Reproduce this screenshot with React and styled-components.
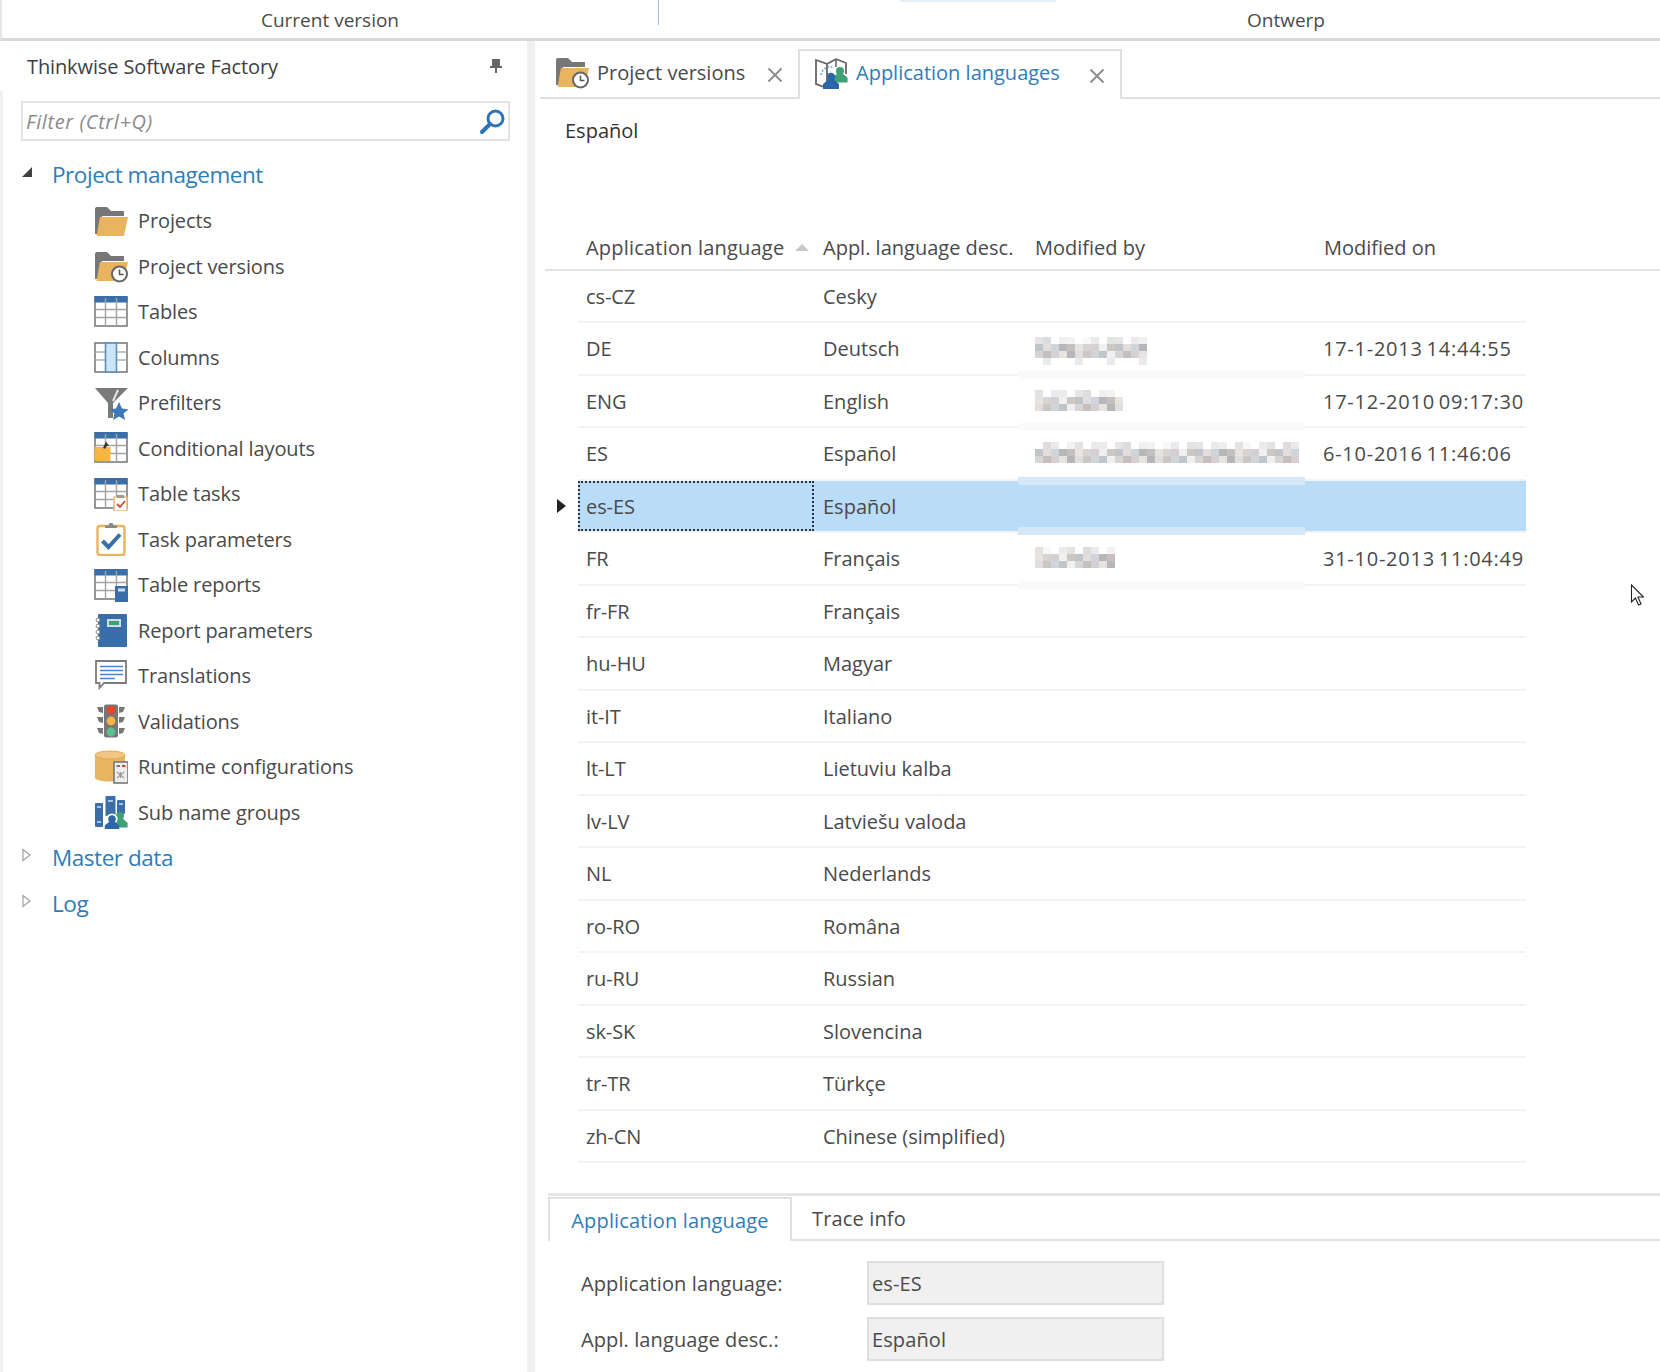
import React from "react";
import styled, { createGlobalStyle } from "styled-components";

const Global = createGlobalStyle`
  html, body { margin: 0; padding: 0; background: #fff; }
  body { font-family: "Open Sans", "Noto Sans", sans-serif; color: #444; width: 1660px; height: 1372px; overflow: hidden; }
  * { box-sizing: border-box; }
`;

const Page = styled.div`
  position: relative;
  width: 1660px;
  height: 1372px;
  display: flex;
  flex-direction: column;
  overflow: hidden;
  background: #fff;
`;

const TopBar = styled.header`
  position: relative;
  height: 41px;
  flex: none;
  display: flex;
  border-bottom: 3px solid #d9d9d9;
  border-left: 2px solid #e6e6e6;
`;
const TopCell = styled.div`
  width: ${p => p.$w}px;
  flex: none;
  height: 36px;
  display: flex;
  align-items: center;
  justify-content: center;
  padding-top: 3px;
  font-size: 19px;
  color: #4a4a4a;
`;
const TopDivider = styled.div`
  width: 1px;
  height: 25px;
  background: #a9bcd8;
  flex: none;
`;
const TopAccent = styled.div`
  position: absolute;
  left: 898px;
  top: 0;
  width: 156px;
  height: 2px;
  background: #e3effb;
`;

const Body = styled.div`
  flex: 1;
  display: flex;
  min-height: 0;
`;

const Side = styled.aside`
  width: 535px;
  flex: none;
  display: flex;
  flex-direction: column;
  border-right: 8px solid #f0f0f0;
`;
const SideHead = styled.div`
  height: 50px;
  flex: none;
  display: flex;
  align-items: center;
  justify-content: space-between;
  padding: 0 24px 0 27px;
  font-size: 20px;
  letter-spacing: -0.12px;
  color: #3f3f3f;
`;
const SideBody = styled.div`
  flex: 1;
  border-left: 3px solid #f0f0f0;
  padding: 10px 17px 0 18px;
`;
const Filter = styled.div`
  height: 40px;
  display: flex;
  align-items: center;
  justify-content: space-between;
  padding: 0 2px 0 3px;
  border: 2px solid #e3e3e3;
  font-size: 20px;
  font-style: italic;
  letter-spacing: 0.6px;
  color: #8a8a8a;
`;
const TreeHead = styled.div`
  height: ${p => p.$h || 45.5}px;
  margin-top: ${p => p.$top || 0}px;
  display: flex;
  align-items: center;
  font-size: 22.5px;
  letter-spacing: -0.45px;
  color: #2f7db8;
`;
const Arrow = styled.span`
  width: 31px;
  flex: none;
  display: flex;
  align-items: center;
  padding-bottom: 5px;
`;
const TreeGroup = styled.div`
  display: flex;
  flex-direction: column;
  padding-left: 73px;
  margin-top: -3px;
`;
const TreeItem = styled.div`
  height: 45.5px;
  display: flex;
  align-items: center;
  gap: 10px;
  font-size: 20px;
  letter-spacing: -0.12px;
  color: #4a4a4a;
`;

const Main = styled.main`
  flex: 1;
  min-width: 0;
  display: flex;
  flex-direction: column;
`;
const TabStrip = styled.div`
  height: 58px;
  flex: none;
  display: flex;
  align-items: flex-end;
  margin-left: 5px;
  border-bottom: 2px solid #e0e0e0;
`;
const DocTab = styled.div`
  width: ${p => p.$w}px;
  flex: none;
  display: flex;
  align-items: center;
  gap: 8px;
  padding-left: ${p => p.$pad}px;
  font-size: 20px;
  color: ${p => (p.$active ? "#2f7db8" : "#4a4a4a")};
  background: #fff;
  position: relative;
  ${p => (p.$active
    ? "border: 2px solid #e0e0e0; border-bottom: none; margin-bottom: -2px; height: 50px; padding-bottom: 5px;"
    : "height: 46px; margin-bottom: 2px;")}
`;
const CloseSlot = styled.span`
  position: absolute;
  right: ${p => p.$r}px;
  top: 50%;
  margin-top: ${p => p.$m}px;
  width: 16px;
  height: 16px;
`;
const RecordTitle = styled.div`
  height: 150px;
  flex: none;
  padding: 18px 0 0 30px;
  font-size: 20px;
  font-weight: 500;
  color: #333;
`;
const GridHead = styled.div`
  height: 37px;
  flex: none;
  margin-left: 10px;
  padding-left: 33px;
  display: flex;
  align-items: flex-start;
  border-bottom: 2px solid #e3e3e3;
  margin-top: -15px;
  font-size: 20px;
  color: #4a4a4a;
`;
const Col = styled.div`
  flex: none;
  width: ${p => p.$w}px;
  padding-left: ${p => p.$pad ?? 8}px;
  position: relative;
  white-space: nowrap;
  letter-spacing: ${p => p.$track || 0}px;
`;
const DateCol = styled(Col)`
  letter-spacing: 0.75px;
  word-spacing: -2px;
`;
const SortMark = styled.span`
  position: absolute;
  left: 217px;
  top: 10px;
  width: 0;
  height: 0;
  border-left: 7px solid transparent;
  border-right: 7px solid transparent;
  border-bottom: 7px solid #c8c8c8;
`;
const Rows = styled.div`
  flex: none;
  margin-top: -0.2px;
  padding-left: 43px;
  position: relative;
`;
const Row = styled.div`
  position: relative;
  width: 948px;
  height: 52.5px;
  display: flex;
  align-items: center;
  border-bottom: 2px solid #f3f3f3;
  font-size: 20px;
  letter-spacing: -0.1px;
  color: #4a4a4a;
  background: ${p => (p.$selected ? "#b9dcf9" : "transparent")};
`;
const RowPointer = styled.span`
  position: absolute;
  left: -21px;
  top: 18px;
  width: 0;
  height: 0;
  border-top: 7px solid transparent;
  border-bottom: 7px solid transparent;
  border-left: 9px solid #222;
`;
const FocusCell = styled.div`
  flex: none;
  width: ${p => p.$w}px;
  height: 50px;
  padding-left: 8px;
  display: flex;
  align-items: center;
  ${p => (p.$focus ? "outline: 2px dotted #2b3540; outline-offset: -2px;" : "")}
`;
const MaskCell = styled.div`
  position: relative;
  flex: none;
  width: 287px;
  height: 100%;
  padding: 5px 0 0 17px;
  display: flex;
  align-items: center;
  ${p => (p.$selected
    ? "background: linear-gradient(#d5e8f8 0 4px, #b9dcf9 4px calc(100% - 4px), #d5e8f8 calc(100% - 4px)); box-shadow: 0 -4px 0 #d5e8f8, 0 4px 0 #d5e8f8;"
    : "")}
  ${p => (p.$band
    ? "&::after { content: ''; position: absolute; left: 0; right: 0; bottom: -5px; height: 8px; background: #fafafa; }"
    : "")}
`;
const Details = styled.section`
  flex: 1;
  margin-top: 30px;
  margin-left: 13px;
  border-top: 3px solid #e6e6e6;
`;
const DetailTabs = styled.div`
  height: 43px;
  margin-top: 2px;
  display: flex;
  align-items: flex-end;
  border-bottom: 2px solid #e0e0e0;
  font-size: 20px;
  letter-spacing: 0.15px;
`;
const DetailTab = styled.div`
  width: ${p => p.$w}px;
  display: flex;
  align-items: center;
  justify-content: center;
  color: ${p => (p.$active ? "#2f7db8" : "#4a4a4a")};
  background: #fff;
  ${p => (p.$active
    ? "border: 2px solid #e0e0e0; border-bottom: none; margin-bottom: -2px; height: 44px;"
    : "height: 41px;")}
`;
const FormRow = styled.div`
  display: flex;
  align-items: center;
  height: 44px;
  margin-top: ${p => p.$top}px;
  padding-left: 33px;
  font-size: 20px;
  letter-spacing: 0.1px;
  color: #4a4a4a;
`;
const FormLabel = styled.span`
  width: 286px;
  flex: none;
`;
const FormValue = styled.div`
  width: 297px;
  height: 44px;
  background: #f0f0f0;
  border: 2px solid #dedede;
  padding-left: 3px;
  display: flex;
  align-items: center;
`;
const CursorLayer = styled.svg`
  position: absolute;
  left: 1630px;
  top: 584px;
`;

const GRID = "#7c7c7c";
const BLUE = "#3a6ea8";
const ORANGE = "#e8b45f";

const TableBase = ({ header = true }) => (
  <>
    <rect x="1" y="2" width="32" height="29" fill="#fff" stroke={GRID} strokeWidth="1.6" />
    {header && <rect x="0.5" y="1" width="33" height="6.5" fill={BLUE} />}
    <path d="M11.5 3v28M22.5 3v28M1 14.5h32M1 22.5h32" stroke="#a3a3a3" strokeWidth="1.4" fill="none" />
  </>
);
const IconSvg = styled.svg`
  flex: none;
`;
const Frame = ({ children, w = 34, h = 34 }) => (
  <IconSvg width={w} height={h} viewBox="0 0 34 34">{children}</IconSvg>
);
const FolderShape = () => (
  <>
    <path d="M1 30V5a2 2 0 0 1 2-2h10l4 4h13v5H8L4 30z" fill="#777" />
    <path d="M6 13h28l-4 19H2.5z" fill={ORANGE} />
  </>
);
const Clock = () => (
  <>
    <circle cx="25.5" cy="25" r="7.5" fill="#fff" stroke="#666" strokeWidth="2" />
    <path d="M25.5 20.5V25.5h4" fill="none" stroke="#555" strokeWidth="1.5" />
  </>
);
const Person = ({ x, y, c, s = 1 }) => (
  <g transform={`translate(${x} ${y}) scale(${s})`}>
    <circle cx="0" cy="0" r="4.2" fill={c} />
    <path d="M-3 3L-8 7V12H8V7L3 3z" fill={c} />
  </g>
);

const icons = {
  folder: <Frame><FolderShape /></Frame>,
  versions: <Frame><FolderShape /><Clock /></Frame>,
  table: <Frame><TableBase /></Frame>,
  columns: (
    <Frame>
      <rect x="1" y="3" width="32" height="29" fill="#fff" stroke={GRID} strokeWidth="1.6" />
      <path d="M1 12h32M1 20h32" stroke="#b0b0b0" strokeWidth="1.3" />
      <rect x="11.5" y="3" width="11" height="29" fill="#cbe4f8" stroke="#5b8fbd" strokeWidth="1.6" />
    </Frame>
  ),
  prefilter: (
    <Frame>
      <path d="M1 2h33L19 17v15h-5V17z" fill="#7a7a7a" />
      <path d="M24 4l-5 11" stroke="#e6e6e6" strokeWidth="2" />
      <path d="M25 16l3 6.5 6.5.7-5 4.4 1.5 6.4-6-3.4-6 3.4 1.5-6.4-5-4.4 6.5-.7z" fill="#3d78b8" />
    </Frame>
  ),
  conditional: (
    <Frame>
      <TableBase />
      <rect x="0.5" y="16" width="16" height="14" fill="#f6b544" />
      <path d="M9 17l3-6.5 3 4.5-2-.3-2 3z" fill="#333" />
    </Frame>
  ),
  tasks: (
    <Frame>
      <TableBase />
      <rect x="20" y="20" width="13" height="14" rx="1" fill="#fff" stroke="#eaba73" strokeWidth="1.6" />
      <rect x="23" y="18" width="7" height="3" fill="#999" />
      <path d="M23 27l3 3 5-6" stroke="#d04a3c" strokeWidth="1.8" fill="none" />
    </Frame>
  ),
  taskparams: (
    <Frame>
      <rect x="3.5" y="4" width="27" height="29" rx="2.5" fill="#fff" stroke={ORANGE} strokeWidth="2.4" />
      <path d="M11 6V3.5h3.5L15.5 1h3l1 2.5H23V6z" fill="#888" />
      <path d="M8.5 19l6 6L26 12.5" stroke={BLUE} strokeWidth="4" fill="none" />
    </Frame>
  ),
  reports: (
    <Frame>
      <TableBase />
      <rect x="21" y="18" width="13" height="16" fill={BLUE} />
      <rect x="24" y="20.5" width="7" height="3" fill="#cfe0f2" />
    </Frame>
  ),
  reportparams: (
    <Frame>
      <rect x="4" y="1" width="29" height="33" rx="1" fill={BLUE} />
      <rect x="13" y="6" width="14" height="8" fill="#fff" opacity=".75" />
      <rect x="15" y="8" width="10" height="4" fill="#3aa36f" />
      {[7, 13, 19, 25].map(y => (
        <circle key={y} cx="4" cy={y} r="1.9" fill="#fff" stroke="#888" strokeWidth="1" />
      ))}
    </Frame>
  ),
  translations: (
    <Frame>
      <path d="M2 2h30v22H10l-4.5 5V24H2z" fill="#fff" stroke={GRID} strokeWidth="1.8" />
      <path d="M6 7.5h23M6 11.5h23M6 15.5h23M6 19.5h15" stroke="#4b86c4" strokeWidth="1.7" />
    </Frame>
  ),
  validations: (
    <Frame>
      <rect x="10" y="0.5" width="14" height="33" rx="2" fill="#777" />
      <path d="M3 3h6v6L5 8zM31 3h-6v6l4-1zM3 13h6v6l-4-1zM31 13h-6v6l4-1zM3 24h6v6l-4-1zM31 24h-6v6l4-1z" fill="#777" />
      <circle cx="17" cy="6" r="4.4" fill="#e2472f" />
      <circle cx="17" cy="17" r="4.4" fill="#f6b544" />
      <circle cx="17" cy="28" r="4.4" fill="#5fc08f" />
    </Frame>
  ),
  runtime: (
    <Frame>
      <path d="M1 5.5v22c0 2.5 7 4 15 4s15-1.5 15-4v-22z" fill={ORANGE} />
      <ellipse cx="16" cy="5" rx="15" ry="4" fill="#f1c684" stroke="#e2a950" strokeWidth="1" />
      <rect x="20" y="12" width="14" height="21" fill="#eee" stroke="#777" strokeWidth="1.6" />
      <path d="M22.5 16h3.5" stroke="#777" strokeWidth="2" />
      <path d="M28 16h3.5" stroke="#d04a3c" strokeWidth="2" />
      <path d="M23 22l7 6M30 22l-7 6M26.5 22v6" stroke="#999" strokeWidth="1.1" />
    </Frame>
  ),
  groups: (
    <Frame>
      <rect x="1" y="8" width="8" height="24" rx="1" fill={BLUE} />
      <rect x="11.5" y="1" width="10" height="20" rx="1" fill={BLUE} />
      <rect x="23" y="5" width="8" height="14" rx="1" fill={BLUE} />
      <path d="M3 12h4M3 27h4M14 6h5M25 9h4" stroke="#cfe0f2" strokeWidth="1.5" />
      <Person x="26" y="21" c="#3fa077" s=".95" />
      <circle cx="18" cy="24" r="5.6" fill="#fff" />
      <Person x="18" y="24" c="#2c65a8" s=".9" />
    </Frame>
  ),
  languages: (
    <Frame>
      <path d="M2 4l11 4v24L2 28zM13 8l9-5M22 3l10 4v11" fill="#fff" stroke="#666" strokeWidth="1.8" />
      <path d="M22 3v8" stroke="#666" strokeWidth="1.6" />
      <path d="M7 19c1-6 6-9 11-8" fill="none" stroke="#6aa0d4" strokeWidth="1.5" strokeDasharray="2 1.5" />
      <Person x="26" y="15" c="#3fa077" s=".95" />
      <Person x="17" y="21" c="#2c65a8" s="1" />
    </Frame>
  ),
};

const Triangle = ({ open }) =>
  open ? (
    <svg width="12" height="12" viewBox="0 0 12 12"><path d="M11 1v10H1z" fill="#404040" /></svg>
  ) : (
    <svg width="12" height="14" viewBox="0 0 12 14"><path d="M2 1.5l7 5.5-7 5.5z" fill="#fff" stroke="#a0a0a0" strokeWidth="1.2" /></svg>
  );

const CloseIcon = () => (
  <svg width="16" height="16" viewBox="0 0 16 16">
    <path d="M1.5 1.5l13 13M14.5 1.5l-13 13" stroke="#8f8f8f" strokeWidth="2" />
  </svg>
);

const PinIcon = () => (
  <svg width="14" height="16" viewBox="0 0 14 16">
    <path d="M3 1h8v7h2v2H8v5H6v-5H1V8h2z" fill="#666" />
  </svg>
);

const SearchIcon = () => (
  <svg width="27" height="27" viewBox="0 0 27 27">
    <circle cx="16.5" cy="10.5" r="7.5" fill="none" stroke="#2e74b5" strokeWidth="3" />
    <path d="M11 16L3 24" stroke="#2e74b5" strokeWidth="4" strokeLinecap="round" />
  </svg>
);

const mosaicPalette = ["#c2bdbc", "#d5d3d2", "#b3b3b6", "#e6e2dd", "#ced3d9", "#c9c4c0", "#dedcdc", "#f0eff0", "#bcc2c6", "#d4cdd3"];
const Mosaic = ({ w, seed, drop }) => {
  const cols = Math.round(w / 8);
  const cells = [];
  for (let r = 0; r < 4; r++) {
    for (let c = 0; c < cols; c++) {
      const n = (c * 7 + r * 13 + seed * 5 + ((c * r) % 5)) % mosaicPalette.length;
      const faint = r === 0 || r === 3;
      const skip = (r === 3 && !(drop && c % 4 === 1)) || (r === 0 && (c + seed) % 3 === 0);
      if (skip) continue;
      cells.push(
        <rect key={`${r}-${c}`} x={c * 8} y={r * 7} width="8" height="7" fill={mosaicPalette[n]} opacity={faint ? 0.45 : 0.95} />
      );
    }
  }
  return <svg width={cols * 8} height="28" viewBox={`0 0 ${cols * 8} 28`} shapeRendering="crispEdges">{cells}</svg>;
};

const navItems = [
  ["folder", "Projects"],
  ["versions", "Project versions"],
  ["table", "Tables"],
  ["columns", "Columns"],
  ["prefilter", "Prefilters"],
  ["conditional", "Conditional layouts"],
  ["tasks", "Table tasks"],
  ["taskparams", "Task parameters"],
  ["reports", "Table reports"],
  ["reportparams", "Report parameters"],
  ["translations", "Translations"],
  ["validations", "Validations"],
  ["runtime", "Runtime configurations"],
  ["groups", "Sub name groups"],
];

const rows = [
  { code: "cs-CZ", desc: "Cesky" },
  { code: "DE", desc: "Deutsch", mask: 112, seed: 1, drop: true, on: "17-1-2013 14:44:55" },
  { code: "ENG", desc: "English", mask: 88, seed: 2, on: "17-12-2010 09:17:30" },
  { code: "ES", desc: "Español", mask: 264, seed: 3, on: "6-10-2016 11:46:06" },
  { code: "es-ES", desc: "Español", selected: true },
  { code: "FR", desc: "Français", mask: 80, seed: 4, on: "31-10-2013 11:04:49" },
  { code: "fr-FR", desc: "Français" },
  { code: "hu-HU", desc: "Magyar" },
  { code: "it-IT", desc: "Italiano" },
  { code: "lt-LT", desc: "Lietuviu kalba" },
  { code: "lv-LV", desc: "Latviešu valoda" },
  { code: "NL", desc: "Nederlands" },
  { code: "ro-RO", desc: "Româna" },
  { code: "ru-RU", desc: "Russian" },
  { code: "sk-SK", desc: "Slovencina" },
  { code: "tr-TR", desc: "Türkçe" },
  { code: "zh-CN", desc: "Chinese (simplified)" },
];

export default function App() {
  return (
    <Page>
      <Global />
      <TopBar>
        <TopCell $w={656}>Current version</TopCell>
        <TopDivider />
        <TopCell $w={1254}>Ontwerp</TopCell>
        <TopAccent />
      </TopBar>
      <Body>
        <Side>
          <SideHead>
            <span>Thinkwise Software Factory</span>
            <PinIcon />
          </SideHead>
          <SideBody>
            <Filter>
              <span>Filter (Ctrl+Q)</span>
              <SearchIcon />
            </Filter>
            <TreeHead $h={53} $top={7}>
              <Arrow><Triangle open /></Arrow>
              Project management
            </TreeHead>
            <TreeGroup>
              {navItems.map(([icon, label]) => (
                <TreeItem key={label}>
                  {icons[icon]}
                  {label}
                </TreeItem>
              ))}
            </TreeGroup>
            <TreeHead>
              <Arrow><Triangle /></Arrow>
              Master data
            </TreeHead>
            <TreeHead>
              <Arrow><Triangle /></Arrow>
              Log
            </TreeHead>
          </SideBody>
        </Side>
        <Main>
          <TabStrip>
            <DocTab $w={258} $pad={15}>
              {icons.versions}
              <span>Project versions</span>
              <CloseSlot $r={15} $m={-10}><CloseIcon /></CloseSlot>
            </DocTab>
            <DocTab $active $w={324} $pad={14}>
              {icons.languages}
              <span>Application languages</span>
              <CloseSlot $r={15} $m={-12}><CloseIcon /></CloseSlot>
            </DocTab>
          </TabStrip>
          <RecordTitle>Español</RecordTitle>
          <GridHead>
            <Col $w={245} $pad={8} $track={0.2}>Application language<SortMark /></Col>
            <Col $w={212} $pad={0}>Appl. language desc.</Col>
            <Col $w={289} $pad={0}>Modified by</Col>
            <Col $w={200} $pad={0}>Modified on</Col>
          </GridHead>
          <Rows>
            {rows.map(r => (
              <Row key={r.code} $selected={r.selected}>
                {r.selected && <RowPointer />}
                <FocusCell $w={236} $focus={r.selected}>{r.code}</FocusCell>
                <Col $w={204} $pad={9}>{r.desc}</Col>
                <MaskCell $selected={r.selected} $band={!!r.mask}>
                  {r.mask && <Mosaic w={r.mask} seed={r.seed} drop={r.drop} />}
                </MaskCell>
                <DateCol $w={200} $pad={18}>{r.on}</DateCol>
              </Row>
            ))}
          </Rows>
          <Details>
            <DetailTabs>
              <DetailTab $active $w={244}>Application language</DetailTab>
              <DetailTab $w={134}>Trace info</DetailTab>
            </DetailTabs>
            <FormRow $top={20}>
              <FormLabel>Application language:</FormLabel>
              <FormValue>es-ES</FormValue>
            </FormRow>
            <FormRow $top={12}>
              <FormLabel>Appl. language desc.:</FormLabel>
              <FormValue>Español</FormValue>
            </FormRow>
          </Details>
        </Main>
      </Body>
      <CursorLayer width="14" height="23" viewBox="0 0 14 23">
        <path d="M1.5 1v17l4-4 3 7 2.5-1-3-7h5.5z" fill="#fff" stroke="#222" strokeWidth="1.1" />
      </CursorLayer>
    </Page>
  );
}
